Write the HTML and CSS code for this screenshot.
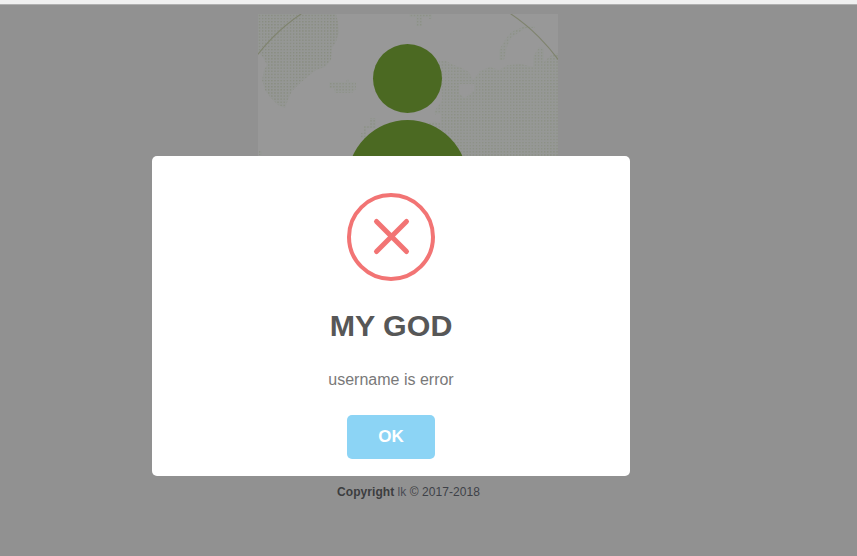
FILE: index.html
```
<!DOCTYPE html>
<html lang="en">
<head>
<meta charset="utf-8">
<title>Login</title>
<link rel="stylesheet" href="styles.css">
</head>
<body>
<div class="topbar"></div>
<main class="page">
  <svg class="avatar" width="300" height="300" viewBox="0 0 300 300">
    <defs>
      <pattern id="dots" width="3.1" height="3.1" patternUnits="userSpaceOnUse">
        <rect width="3.1" height="3.1" fill="#959795"/>
        <rect x=".8" y=".8" width="1.3" height="1.3" fill="#878b7e"/>
      </pattern>
      <pattern id="soft" width="3.1" height="3.1" patternUnits="userSpaceOnUse">
        <rect width="3.1" height="3.1" fill="#969896"/>
        <rect x=".8" y=".8" width="1.3" height="1.3" fill="#8b9083"/>
      </pattern>
    </defs>
    <rect width="300" height="300" fill="#989898"/>
    <path fill="url(#dots)" d="M0 0H78L80 8 81 18 78 28 74 34 73 46 67 53 58 56 48 64 40 71 34 77 30 86 27 94 20 91 12 83 7 76 4 66 6 56 9 51 5 43 0 38Z"/>
    <path fill="url(#soft)" d="M71 68H88L89 65H91V68H98V75L94 79H77L76 74H71ZM112 104H118V114H108V124H103V119H106V112H112ZM151 0H174V5H171V3H164V12H158V3H151ZM1 137H4V141H1ZM241 46V36L247 26 253 18 260 15 267 12H277V14H268L260 19 253 24 249 33 246 46Z"/>
    <path fill="url(#soft)" d="M181 47H189L193 50 204 54 211 58 215 66 222 57 232 53 241 56 250 51 263 50 275 53V43L281 33 286 34V48L292 42 300 39V300H150V113L181 107 176 98 184 86Z"/>
    <path fill="#989898" d="M201 70H216V77L207 84 201 80ZM183 100H178V109H183Z"/>
    <circle cx="148" cy="156" r="188" fill="none" stroke="#7f836e" stroke-width="1.1"/>
    <circle cx="149.5" cy="64.5" r="34.5" fill="#4b6922"/>
    <ellipse cx="149.5" cy="168" rx="60.5" ry="62" fill="#4b6922"/>
  </svg>
  <footer class="copyright"><strong>Copyright</strong> <a>lk</a> © <span>2017-2018</span></footer>
</main>
<section class="dialog" role="dialog">
  <svg class="error" width="88" height="88" viewBox="0 0 88 88" fill="none" stroke="#f27474">
    <circle cx="44" cy="44" r="42" stroke-width="4"/>
    <path d="M29.5 28.5 59.5 58.5M59.5 28.5 29.5 58.5" stroke-width="5" stroke-linecap="round"/>
  </svg>
  <h2>MY GOD</h2>
  <p>username is error</p>
  <button>OK</button>
</section>
</body>
</html>
```
FILE: styles.css
```
* { box-sizing: border-box; }
html, body { height: 100%; }
body {
  margin: 0;
  overflow: hidden;
  background: #919191;
  font-family: "Liberation Sans", Arial, sans-serif;
}
.topbar {
  height: 5px;
  background: #f0f0f0;
  border-bottom: 1px solid #b0b0b0;
}
.page {
  width: 817px;
  padding-top: 9px;
  display: flex;
  flex-direction: column;
  align-items: center;
}
.avatar {
  display: block;
  margin-right: 1px;
}
.copyright {
  margin-top: 170px;
  font-size: 12px;
  line-height: 16px;
  letter-spacing: 0.05px;
  color: #3c3d3f;
  white-space: nowrap;
}
.copyright a { color: #4a4c55; }
.copyright span { color: #3e4148; }
.dialog {
  position: absolute;
  left: 152px;
  top: 156px;
  width: 478px;
  height: 320px;
  padding-top: 37px;
  background: #fff;
  border-radius: 5px;
  display: flex;
  flex-direction: column;
  align-items: center;
}
.dialog h2 {
  margin: 24px 0 0;
  font-size: 30.4px;
  line-height: 40px;
  font-weight: 600;
  color: #575757;
}
.dialog p {
  margin: 25px 0 0;
  font-size: 16px;
  line-height: 20px;
  color: #797979;
}
.dialog button {
  margin-top: 25px;
  width: 88px;
  height: 44px;
  padding: 0;
  border: 0;
  border-radius: 5px;
  background: #8cd4f5;
  color: #fff;
  font: 600 17px "Liberation Sans", Arial, sans-serif;
}
```
